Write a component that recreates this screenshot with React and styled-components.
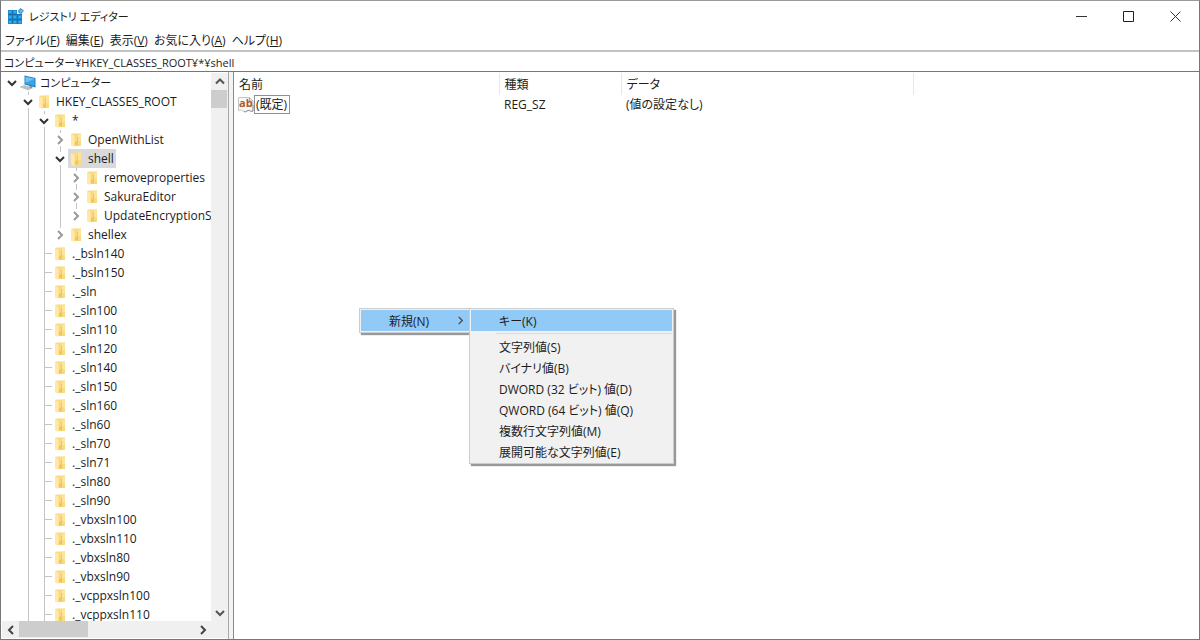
import React from 'react';
import styled, { createGlobalStyle, css } from 'styled-components';

const GlobalStyle = createGlobalStyle`
    *, *::before, *::after {
        box-sizing: border-box;
    }

    body {
        margin: 0;
        background: #fff;
    }

    body, button, input, table {
        font-family: "Open Sans", "Noto Sans CJK JP", sans-serif;
        font-size: 12px;
        font-feature-settings: "palt";
        color: #1c1c1c;
    }

    button {
        padding: 0;
        border: 0;
        background: none;
        line-height: inherit;
    }
`

const Window = styled.div`
    display: flex;
    flex-direction: column;
    height: 100vh;
    line-height: 19px;
    border: 1px solid #77777a;
    border-top-color: #9a9a9a;
`

const TitleBar = styled.header`
    display: flex;
    align-items: center;
    height: 30px;
    padding-left: 6px;
    flex: none;
`

const Title = styled.h1`
    flex: 1;
    margin: 0 0 0 4px;
    font-size: 11px;
    font-weight: 400;
`

const CaptionButton = styled.button`
    display: grid;
    place-items: center;
    width: 47px;
    height: 30px;
`

const MenuBar = styled.nav`
    display: flex;
    flex: none;
    gap: 6px;
    height: 19px;
    padding-left: 4px;
`

const MenuButton = styled.button`
    white-space: nowrap;
`

const AddressBar = styled.input`
    flex: none;
    width: 100%;
    height: 22px;
    padding: 0 0 0 3px;
    border: 0;
    border-top: 2px solid #c2c2c2;
    border-bottom: 1px solid #77777a;
    outline: none;
    font-size: 11px;
`

const Panes = styled.main`
    display: flex;
    flex: 1;
    min-height: 0;
`

const TreePane = styled.aside`
    display: grid;
    grid-template-columns: 1fr 17px;
    grid-template-rows: 1fr 17px;
    width: 228px;
    flex: none;
    padding: 1px 0 1px 1px;
    border-right: 1px solid #a8a8a8;
`

const Splitter = styled.div`
    width: 4px;
    flex: none;
    background: #f3f3f3;
`

const ListPane = styled.section`
    flex: 1;
    min-width: 0;
    padding-top: 1px;
    border-left: 1px solid #8a8a8a;
`

const Tree = styled.ul`
    min-height: 0;
    margin: 0;
    padding: 0 0 0 2px;
    overflow: hidden;
    list-style: none;
`

const TreeRow = styled.li`
    display: flex;
    height: 19px;
    white-space: nowrap;
`

const line = 'linear-gradient(#c4c4c4, #c4c4c4)'

const guides = {
    none: css``,
    pass: css`background: ${line} 8px 0 / 1px 100% no-repeat;`,
    tee: css`background: ${line} 8px 0 / 1px 100% no-repeat, ${line} 9px 9px / 7px 1px no-repeat;`,
    toggle: css`background: ${line} 8px 0 / 1px 3px no-repeat, ${line} 8px 16px / 1px 3px no-repeat;`,
    last: css`background: ${line} 8px 0 / 1px 3px no-repeat;`,
}

const Guide = styled.span`
    flex: none;
    width: 16px;
    ${({ $kind }) => guides[$kind]}
`

const Toggle = styled.button`
    display: grid;
    place-items: center;
    flex: none;
    width: 16px;
    ${({ $kind }) => guides[$kind]}
`

const Node = styled.button`
    display: flex;
    align-items: center;
    gap: 4px;
    padding-right: 2px;
    font-size: ${({ $root }) => ($root ? '11px' : '12px')};
    background: ${({ $selected }) => ($selected ? '#d9d9d9' : 'transparent')};
`

const ScrollBar = styled.div`
    display: flex;
    flex-direction: ${({ $vertical }) => ($vertical ? 'column' : 'row')};
    background: #f0f0f0;
`

const ScrollButton = styled.button`
    display: grid;
    place-items: center;
    flex: none;
    width: 17px;
    height: 17px;
`

const Track = styled.div`
    flex: 1;
`

const Thumb = styled.div`
    width: ${({ $vertical }) => ($vertical ? '16px' : '69px')};
    height: ${({ $vertical }) => ($vertical ? '18px' : '16px')};
    background: #cdcdcd;
`

const Corner = styled.div`
    background: #f0f0f0;
`

const Table = styled.table`
    width: 100%;
    table-layout: fixed;
    border-collapse: collapse;

    th, td {
        padding: 0 0 0 5px;
        font-weight: 400;
        text-align: left;
        white-space: nowrap;
    }

    th {
        height: 22px;
        border-right: 1px solid #e8e8e8;
    }

    th:last-child {
        border-right: 0;
    }
`

const Col = styled.col`
    width: ${({ $width }) => $width};
`

const ValueName = styled.div`
    display: flex;
    align-items: center;
    margin-left: -1px;
`

const ValueLabel = styled.span`
    padding: 0 2px 0 1px;
    border: 1px solid #8f8f8f;
    line-height: 17px;
`

const Menu = styled.ul`
    position: absolute;
    top: 308px;
    left: ${({ $left }) => $left};
    width: ${({ $width }) => $width};
    margin: 0;
    padding: 1px;
    border: 1px solid #cccccc;
    background: #f1f1f1;
    box-shadow: 2px 2px 1px rgba(0, 0, 0, 0.4);
    list-style: none;
`

const MenuItem = styled.button`
    display: flex;
    align-items: center;
    justify-content: space-between;
    width: 100%;
    height: 21px;
    padding: 0 4px 0 28px;
    background: ${({ $active }) => ($active ? '#91c9f7' : 'transparent')};
    white-space: nowrap;
`

const Separator = styled.li`
    height: 1px;
    margin: 2px 0 2px 25px;
    background: #dadada;
`

const paths = {
    up: 'M1 6.5 5 2.5 9 6.5',
    down: 'M1 3 5 7 9 3',
    left: 'M7 1 3 5 7 9',
    right: 'M3 1 7 5 3 9',
}

const Chevron = ({ dir, color = '#404040', width = 2, size = 10 }) => (
    <svg width={size} height={size} viewBox="0 0 10 10" fill="none" stroke={color} strokeWidth={width} aria-hidden="true">
        <path d={paths[dir]} />
    </svg>
)

const AppIcon = () => (
    <svg width="18" height="18" viewBox="0 0 18 18" aria-hidden="true">
        <path d="M1 3h9v4h5v10H1z" fill="#1b8ed6" />
        <path d="M1 7.500h14M1 12.500h14M5.500 3v14M10.500 7v10" stroke="#1670b0" strokeWidth="1" />
        <path d="M2 5h2.500M6.500 5H9M2 10h2.500M6.500 10H9M11.500 10H14M2 15h2.500M6.500 15H9M11.500 15H14" stroke="#43b4ec" strokeWidth="1.500" />
        <path d="m11 3.500 2.500-2.500L17 3.500 14.500 7 11.500 6z" fill="#3d9bd9" />
        <path d="m12.500 3.700 1.500.8 1.500-1.300" stroke="#a9dcf8" fill="none" />
    </svg>
)

const ComputerIcon = () => (
    <svg width="16" height="16" viewBox="0 0 16 16" aria-hidden="true">
        <path d="M4.500.5 15.500 3v9.500L4.500 9.500z" fill="#2280c3" />
        <path d="m5.500 1.800 9 2v7l-9-2.300z" fill="#3ba5e4" />
        <path d="m5.500 1.800 9 2-9 4z" fill="#6cc3f3" />
        <path d="m9.500 11 2.500.6.500 2-3-.6z" fill="#777" />
        <path d="m.5 12 3.500-1.500 7.500 2.500-3 2z" fill="#d9dbdd" stroke="#9a9da0" strokeWidth=".6" />
        <path d="m2.500 12 6.500 2M4 11.300l6 2" stroke="#a5a8ab" strokeWidth=".6" />
    </svg>
)

const FolderIcon = () => (
    <svg width="16" height="16" viewBox="0 0 16 16" aria-hidden="true">
        <path d="M3 2 5 1.500h8V14H5z" fill="#f9da7f" />
        <path d="M3 2 6.500 3.500V15L3 13.500z" fill="#ffe9a6" />
        <path d="M10 1.500h3V9h-3z" fill="#fce59b" />
        <path d="M7 10.500 9 9V5h1v8.500H7z" fill="#efc560" />
    </svg>
)

const StringIcon = () => (
    <svg width="16" height="17" viewBox="0 0 16 17" aria-hidden="true">
        <path d="M.5 1.500h11L15 5v10c-2 1.500-3-1.500-5-.5s-2 2-4 1-3-2-5.500-1z" fill="#f7f7f8" stroke="#c2c4c6" />
        <path d="M6 15.500c2 1 2-.5 4-1s3 2 5 .5V9" fill="none" stroke="#8f9296" />
        <path d="M11.500 1.500V5H15" fill="none" stroke="#a9abad" />
        <text x="1" y="10.500" fontSize="11" fontWeight="700" fill="#ae5c26">ab</text>
    </svg>
)

const keys = [
    '._bsln140', '._bsln150', '._sln', '._sln100', '._sln110', '._sln120', '._sln140',
    '._sln150', '._sln160', '._sln60', '._sln70', '._sln71', '._sln80', '._sln90',
    '._vbxsln100', '._vbxsln110', '._vbxsln80', '._vbxsln90', '._vcppxsln100', '._vcppxsln110',
]

// guides: one entry per indent column, the last one belongs to the node itself
const nodes = [
    { name: 'コンピューター', open: true, guides: ['none'], root: true },
    { name: 'HKEY_CLASSES_ROOT', open: true, guides: ['none', 'toggle'] },
    { name: '*', open: true, guides: ['none', 'pass', 'toggle'] },
    { name: 'OpenWithList', open: false, guides: ['none', 'pass', 'pass', 'toggle'] },
    { name: 'shell', open: true, selected: true, guides: ['none', 'pass', 'pass', 'toggle'] },
    { name: 'removeproperties', open: false, guides: ['none', 'pass', 'pass', 'pass', 'toggle'] },
    { name: 'SakuraEditor', open: false, guides: ['none', 'pass', 'pass', 'pass', 'toggle'] },
    { name: 'UpdateEncryptionSe', open: false, guides: ['none', 'pass', 'pass', 'pass', 'last'] },
    { name: 'shellex', open: false, guides: ['none', 'pass', 'pass', 'last'] },
    ...keys.map(name => ({ name, guides: ['none', 'pass', 'tee'] })),
]

const menus = [
    ['ファイル', 'F'],
    ['編集', 'E'],
    ['表示', 'V'],
    ['お気に入り', 'A'],
    ['ヘルプ', 'H'],
]

const newValues = [
    '文字列値(S)',
    'バイナリ値(B)',
    'DWORD (32 ビット) 値(D)',
    'QWORD (64 ビット) 値(Q)',
    '複数行文字列値(M)',
    '展開可能な文字列値(E)',
]

const KeyNode = ({ node }) => {
    const isLeaf = node.open === undefined
    const parents = isLeaf ? node.guides : node.guides.slice(0, -1)
    const own = node.guides[node.guides.length - 1]

    return (
        <TreeRow role="treeitem" aria-level={node.guides.length} aria-expanded={node.open} aria-selected={!!node.selected}>
            {parents.map((kind, i) => <Guide key={i} $kind={kind} />)}
            {!isLeaf && (
                <Toggle $kind={own} aria-label={node.open ? '折りたたむ' : '展開'}>
                    <Chevron dir={node.open ? 'down' : 'right'} color={node.open ? '#333' : '#999'} />
                </Toggle>
            )}
            <Node $root={node.root} $selected={node.selected}>
                {node.root ? <ComputerIcon /> : <FolderIcon />}
                {node.name}
            </Node>
        </TreeRow>
    )
}

const App = () => {
    const [path, setPath] = React.useState('コンピューター¥HKEY_CLASSES_ROOT¥*¥shell')

    return (
        <>
            <GlobalStyle />
            <Window>
                <TitleBar>
                    <AppIcon />
                    <Title>レジストリ エディター</Title>
                    <CaptionButton aria-label="最小化">
                        <svg width="11" height="11"><path d="M0 5.500h11" stroke="#333" /></svg>
                    </CaptionButton>
                    <CaptionButton aria-label="最大化">
                        <svg width="11" height="11"><path d="M.5.5h10v10H.5z" fill="none" stroke="#222" /></svg>
                    </CaptionButton>
                    <CaptionButton aria-label="閉じる">
                        <svg width="11" height="11"><path d="m.5.5 10 10m0-10-10 10" stroke="#333" /></svg>
                    </CaptionButton>
                </TitleBar>
                <MenuBar>
                    {menus.map(([name, key]) => (
                        <MenuButton key={key}>{name}(<u>{key}</u>)</MenuButton>
                    ))}
                </MenuBar>
                <AddressBar aria-label="アドレス" value={path} onChange={e => setPath(e.target.value)} />
                <Panes>
                    <TreePane>
                        <Tree role="tree">
                            {nodes.map(node => <KeyNode key={node.name} node={node} />)}
                        </Tree>
                        <ScrollBar $vertical>
                            <ScrollButton aria-label="上へ"><Chevron dir="up" color="#555" /></ScrollButton>
                            <Track><Thumb $vertical /></Track>
                            <ScrollButton aria-label="下へ"><Chevron dir="down" color="#555" /></ScrollButton>
                        </ScrollBar>
                        <ScrollBar>
                            <ScrollButton aria-label="左へ"><Chevron dir="left" color="#444" /></ScrollButton>
                            <Track><Thumb /></Track>
                            <ScrollButton aria-label="右へ"><Chevron dir="right" color="#444" /></ScrollButton>
                        </ScrollBar>
                        <Corner />
                    </TreePane>
                    <Splitter />
                    <ListPane>
                        <Table>
                            <colgroup>
                                <Col $width="265px" />
                                <Col $width="122px" />
                                <Col $width="292px" />
                                <Col $width="auto" />
                            </colgroup>
                            <thead>
                                <tr>
                                    <th>名前</th>
                                    <th>種類</th>
                                    <th>データ</th>
                                    <th />
                                </tr>
                            </thead>
                            <tbody>
                                <tr>
                                    <td>
                                        <ValueName>
                                            <StringIcon />
                                            <ValueLabel>(既定)</ValueLabel>
                                        </ValueName>
                                    </td>
                                    <td>REG_SZ</td>
                                    <td>(値の設定なし)</td>
                                    <td />
                                </tr>
                            </tbody>
                        </Table>
                    </ListPane>
                </Panes>
            </Window>
            <Menu role="menu" $left="359px" $width="112px">
                <li>
                    <MenuItem role="menuitem" aria-haspopup="menu" $active>
                        新規(N)
                        <Chevron dir="right" width={1.3} size={9} />
                    </MenuItem>
                </li>
            </Menu>
            <Menu role="menu" $left="469px" $width="205px">
                <li><MenuItem role="menuitem" $active>キー(K)</MenuItem></li>
                <Separator role="separator" />
                {newValues.map(name => (
                    <li key={name}><MenuItem role="menuitem">{name}</MenuItem></li>
                ))}
            </Menu>
        </>
    );
}

export default App;
